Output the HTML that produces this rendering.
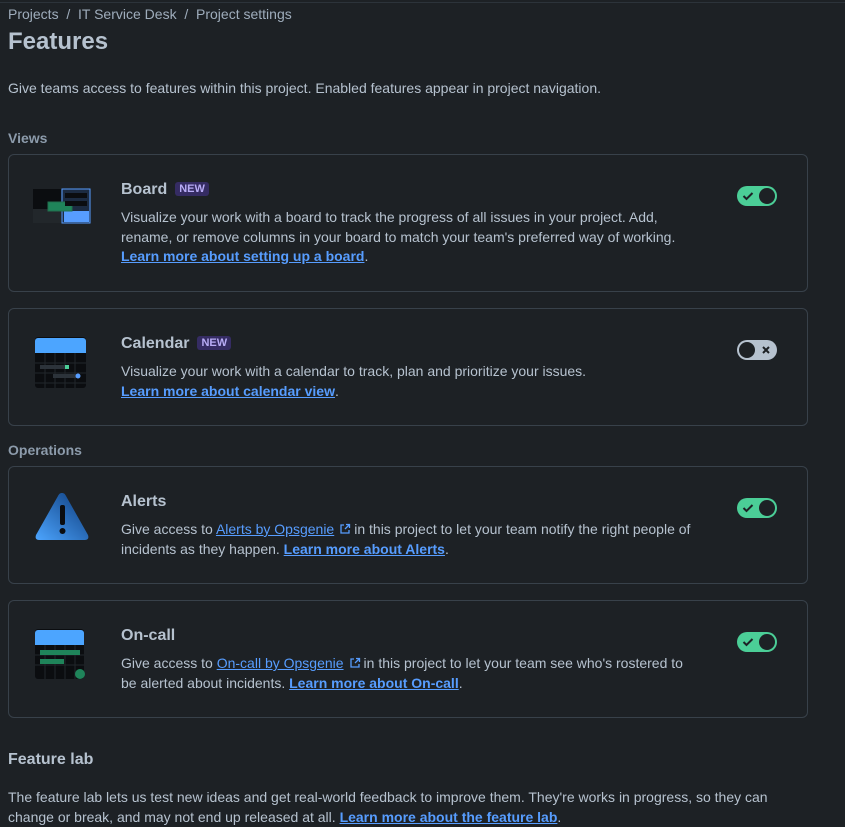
<!DOCTYPE html>
<html><head><meta charset="utf-8"><style>
body{margin:0;background:#1d2125;font-family:"Liberation Sans",sans-serif;color:#b6c2cf;width:845px;height:822px;overflow:hidden;position:relative}
.top{position:absolute;left:0;top:2px;width:845px;height:1px;background:#2c333a}
.a{position:absolute}
.bc{left:8px;top:6px;font-size:14px;color:#9fadbc}
h1{position:absolute;left:8px;top:28px;margin:0;font-size:24px;font-weight:bold;color:#b6c2cf}
.sec{font-size:14px;font-weight:bold;color:#8c9bab}
.card{position:absolute;left:8px;width:800px;border:1px solid #38414a;border-radius:6px;box-sizing:border-box}
.t{position:absolute;left:112px;font-size:16px;font-weight:bold;color:#b6c2cf}
.d{position:absolute;left:112px;font-size:14px;line-height:19.5px;color:#b6c2cf;width:570px}
a{color:#579dff;text-decoration:underline}
a.b{font-weight:bold}
.new{display:inline-block;background:#352c63;color:#b8acf6;font-size:11px;font-weight:bold;padding:1px 4px;border-radius:3px;margin-left:8px;vertical-align:2px}
.tg{position:absolute;left:728px;width:40px;height:20px;border-radius:10px}
.on{background:#4bce97}
.off{background:#b6c2cf}
.k{position:absolute;top:2px;width:16px;height:16px;border-radius:8px;background:#1d2125}
.ext{margin:0 3px 0 5px;vertical-align:-1px}
</style></head><body>
<div class="top"></div>
<div class="a bc">Projects &nbsp;/&nbsp; IT Service Desk &nbsp;/&nbsp; Project settings</div>
<h1>Features</h1>
<div class="a" style="left:8px;top:80px;font-size:14px">Give teams access to features within this project. Enabled features appear in project navigation.</div>
<div class="a sec" style="left:8px;top:130px">Views</div>

<div class="card" style="top:154px;height:138px">
 <svg class="a" style="left:24px;top:32px" width="58" height="38"><rect x="0" y="2" width="28" height="34" fill="#0b0d10"/><rect x="0" y="22" width="28" height="14" fill="#22272b"/><rect x="29" y="2" width="28" height="34" fill="#1c2b41" stroke="#579dff"/><rect x="31" y="24" width="25" height="11" fill="#579dff"/><rect x="15" y="15" width="24" height="9" fill="#1f845a" stroke="#216e4e"/><rect x="32" y="6" width="22" height="5" fill="#0b0d10"/><rect x="32" y="14" width="22" height="5" fill="#0b0d10"/></svg>
 <div class="t" style="top:26px">Board<span class="new">NEW</span></div>
 <div class="d" style="top:53px">Visualize your work with a board to track the progress of all issues in your project. Add, rename, or remove columns in your board to match your team's preferred way of working.<br><a class="b">Learn more about setting up a board</a>.</div>
 <div class="tg on" style="top:31px"><svg class="a" style="left:5px;top:5px" width="12" height="10"><path d="M1.5 5l3 3 6-6" stroke="#1d2125" stroke-width="2" fill="none"/></svg><div class="k" style="left:22px"></div></div>
</div>

<div class="card" style="top:308px;height:118px">
 <svg class="a" style="left:26px;top:28px" width="52" height="52"><rect x="0" y="0" width="51" height="51" rx="3" fill="#0b0d10"/><path d="M0 4a3 3 0 0 1 3-3h45a3 3 0 0 1 3 3v12H0z" fill="#4ca5ff"/><g stroke="#22272b"><path d="M0 26h51M0 36h51M0 46h51M10 16v35M20 16v35M30 16v35M40 16v35"/></g><rect x="5" y="28" width="28" height="4" fill="#2c333a"/><rect x="30" y="28" width="4" height="4" fill="#4bce97"/><rect x="18" y="37" width="24" height="4" fill="#2c333a"/><circle cx="43" cy="39" r="2.5" fill="#579dff"/></svg>
 <div class="t" style="top:26px">Calendar<span class="new">NEW</span></div>
 <div class="d" style="top:53px">Visualize your work with a calendar to track, plan and prioritize your issues.<br><a class="b">Learn more about calendar view</a>.</div>
 <div class="tg off" style="top:31px"><div class="k" style="left:2px"></div><svg class="a" style="left:24px;top:5px" width="10" height="10"><path d="M2 2l6 6M8 2l-6 6" stroke="#1d2125" stroke-width="2"/></svg></div>
</div>

<div class="a sec" style="left:8px;top:442px">Operations</div>

<div class="card" style="top:466px;height:118px">
 <svg class="a" style="left:24px;top:24px" width="58" height="52"><defs><linearGradient id="g" x1="0" y1="1" x2="1" y2="0"><stop offset="0" stop-color="#4ca5ff"/><stop offset="1" stop-color="#0c3a7a"/></linearGradient></defs><path d="M29 2c2 0 3 1 4 3l22 39c1 3 0 5-3 5H6c-3 0-4-2-3-5L25 5c1-2 2-3 4-3z" fill="url(#g)"/><rect x="27" y="14" width="5" height="20" rx="2" fill="#0b0d10"/><circle cx="29.5" cy="40" r="3" fill="#0b0d10"/></svg>
 <div class="t" style="top:26px">Alerts</div>
 <div class="d" style="top:53px">Give access to <a>Alerts by Opsgenie</a><svg class="ext" width="12" height="12"><path d="M5 2H2v8h8V7M7 1.5h3.5V5M10.5 1.5L6 6" stroke="#579dff" stroke-width="1.3" fill="none"/></svg>in this project to let your team notify the right people of incidents as they happen. <a class="b">Learn more about Alerts</a>.</div>
 <div class="tg on" style="top:31px"><svg class="a" style="left:5px;top:5px" width="12" height="10"><path d="M1.5 5l3 3 6-6" stroke="#1d2125" stroke-width="2" fill="none"/></svg><div class="k" style="left:22px"></div></div>
</div>

<div class="card" style="top:600px;height:118px">
 <svg class="a" style="left:26px;top:28px" width="62" height="52"><rect x="0" y="0" width="49" height="50" rx="3" fill="#0b0d10"/><path d="M0 4a3 3 0 0 1 3-3h43a3 3 0 0 1 3 3v12H0z" fill="#4ca5ff"/><g stroke="#22272b"><path d="M0 26h49M0 36h49M10 16v34M20 16v34M30 16v34M40 16v34"/></g><rect x="5" y="21" width="40" height="5" fill="#1f845a"/><rect x="5" y="30" width="24" height="5" fill="#1f845a"/><circle cx="45" cy="45" r="5" fill="#1f845a"/></svg>
 <div class="t" style="top:26px">On-call</div>
 <div class="d" style="top:53px">Give access to <a>On-call by Opsgenie</a><svg class="ext" width="12" height="12"><path d="M5 2H2v8h8V7M7 1.5h3.5V5M10.5 1.5L6 6" stroke="#579dff" stroke-width="1.3" fill="none"/></svg>in this project to let your team see who's rostered to be alerted about incidents. <a class="b">Learn more about On-call</a>.</div>
 <div class="tg on" style="top:31px"><svg class="a" style="left:5px;top:5px" width="12" height="10"><path d="M1.5 5l3 3 6-6" stroke="#1d2125" stroke-width="2" fill="none"/></svg><div class="k" style="left:22px"></div></div>
</div>

<div class="a" style="left:8px;top:751px;font-size:16px;font-weight:bold">Feature lab</div>
<div class="a" style="left:8px;top:788px;font-size:14px;line-height:19.5px;width:765px">The feature lab lets us test new ideas and get real-world feedback to improve them. They're works in progress, so they can change or break, and may not end up released at all. <a class="b">Learn more about the feature lab</a>.</div>
</body></html>
